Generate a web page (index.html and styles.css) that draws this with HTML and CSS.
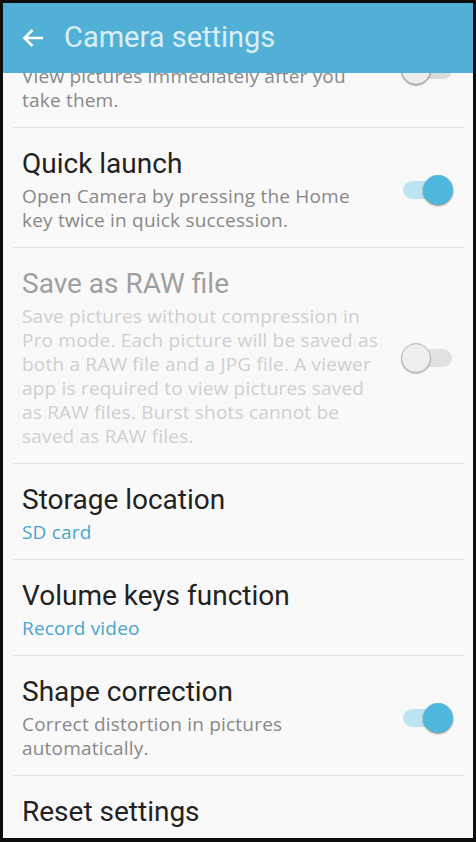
FILE: index.html
```html
<!DOCTYPE html>
<html>
<head>
<meta charset="utf-8">
<link rel="stylesheet" href="styles.css">
</head>
<body>
<div class="screen">
  <header class="appbar">
    <svg class="back" width="22" height="20" viewBox="0 0 22 20"><path d="M21 10H2.5M10.5 2L2.5 10l8 8" fill="none" stroke="#fff" stroke-width="2.6" stroke-linecap="butt" stroke-linejoin="miter"/></svg>
    <span class="apptitle">Camera settings</span>
  </header>
  <div class="viewport">
    <ul class="list">
      <li class="item">
        <div class="text">
          <div class="title">Review pictures</div>
          <div class="desc">View pictures immediately after you take them.</div>
        </div>
        <span class="switch off"><span class="track"></span><span class="knob"></span></span>
      </li>
      <li class="item">
        <div class="text">
          <div class="title">Quick launch</div>
          <div class="desc">Open Camera by pressing the Home key twice in quick succession.</div>
        </div>
        <span class="switch on"><span class="track"></span><span class="knob"></span></span>
      </li>
      <li class="item disabled">
        <div class="text">
          <div class="title">Save as RAW file</div>
          <div class="desc">Save pictures without compression in Pro mode. Each picture will be saved as both a RAW file and a JPG file. A viewer app is required to view pictures saved as RAW files. Burst shots cannot be saved as RAW files.</div>
        </div>
        <span class="switch off"><span class="track"></span><span class="knob"></span></span>
      </li>
      <li class="item">
        <div class="text">
          <div class="title">Storage location</div>
          <div class="value">SD card</div>
        </div>
      </li>
      <li class="item">
        <div class="text">
          <div class="title">Volume keys function</div>
          <div class="value">Record video</div>
        </div>
      </li>
      <li class="item">
        <div class="text">
          <div class="title">Shape correction</div>
          <div class="desc">Correct distortion in pictures automatically.</div>
        </div>
        <span class="switch on"><span class="track"></span><span class="knob"></span></span>
      </li>
      <li class="item">
        <div class="text">
          <div class="title">Reset settings</div>
        </div>
      </li>
    </ul>
  </div>
</div>
</body>
</html>
```
FILE: styles.css
```css
html, body {
  margin: 0;
  padding: 0;
  background: #0d0d0d;
}
body {
  padding: 3px 3px 4px 3px;
  width: 476px;
  height: 842px;
  box-sizing: border-box;
  font-family: Roboto, "Noto Sans", sans-serif;
}
.screen {
  width: 470px;
  height: 835px;
  background: #f9f9f9;
  display: flex;
  flex-direction: column;
  position: relative;
  overflow: hidden;
}
.appbar {
  height: 70px;
  flex: none;
  background: #52afd5;
  display: flex;
  align-items: center;
  padding-left: 19px;
  position: relative;
  z-index: 2;
}
.back {
  display: block;
}
.apptitle {
  margin-left: 20px;
  font-size: 29px;
  color: #d9eff8;
  margin-top: -2px;
}
.viewport {
  flex: 1;
  overflow: hidden;
}
.list {
  list-style: none;
  margin: -65px 0 0 0;
  padding: 0;
}
.item {
  display: flex;
  align-items: center;
  margin: 0 9px 0 10px;
  padding: 20px 11px 15px 9px;
  border-bottom: 1px solid #e3e3e3;
}
.item:last-child {
  border-bottom: none;
}
.text {
  flex: 1;
  min-width: 0;
}
.title {
  font-size: 28px;
  line-height: 32px;
  color: #222;
  margin-bottom: 4px;
}
.desc {
  font-family: "Open Sans", "Noto Sans", sans-serif;
  font-size: 19px;
  letter-spacing: 0.2px;
  line-height: 24px;
  color: #888;
  width: 345px;
}
.value {
  font-family: "Open Sans", "Noto Sans", sans-serif;
  font-size: 19px;
  letter-spacing: 0.2px;
  line-height: 24px;
  color: #48a5cd;
}
.disabled .title { color: #9f9f9f; }
.disabled .desc { color: #cfcfcf; width: 362px; }

.switch {
  position: relative;
  width: 52px;
  height: 32px;
  flex: none;
  margin-left: 10px;
}
.track {
  position: absolute;
  left: 2px;
  right: 1px;
  top: 7px;
  height: 18px;
  border-radius: 9px;
}
.knob {
  position: absolute;
  top: 1px;
  width: 30px;
  height: 30px;
  border-radius: 50%;
  box-sizing: border-box;
}
.switch.on .track { background: #bde4f3; }
.switch.on .knob {
  right: 0;
  background: #4fb7de;
  box-shadow: 0 1px 2px rgba(0,0,0,0.45);
}
.switch.off .track { background: #dadada; }
.switch.off .knob {
  left: 0;
  background: #ececec;
  border: 1px solid #9c9c9c;
  box-shadow: 0 1px 1px rgba(0,0,0,0.25);
}
.disabled .switch.off .track { background: #e2e2e2; }
.disabled .switch.off .knob { background: #eeeeee; border-color: #b5b5b5; }
```
